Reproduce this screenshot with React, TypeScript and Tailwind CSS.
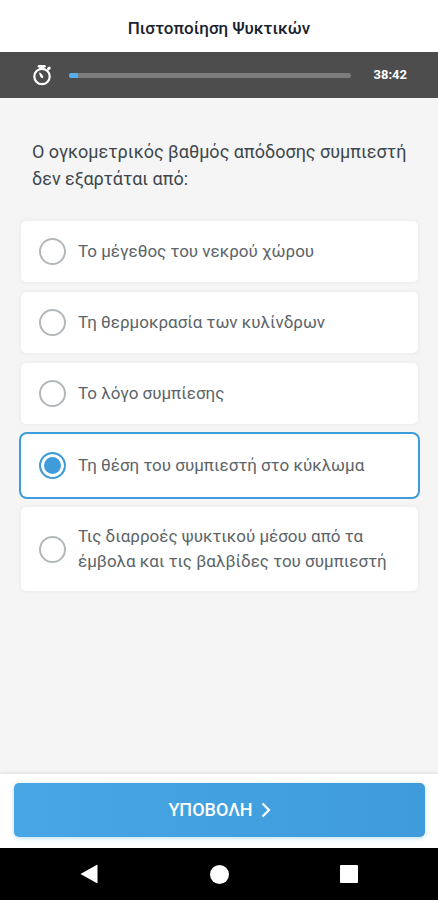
import React, { useState } from 'react';

const TOTAL_SECONDS = 40 * 60;
const REMAINING_SECONDS = 38 * 60 + 42;

const options = [
    'Το μέγεθος του νεκρού χώρου',
    'Τη θερμοκρασία των κυλίνδρων',
    'Το λόγο συμπίεσης',
    'Τη θέση του συμπιεστή στο κύκλωμα',
    'Τις διαρροές ψυκτικού μέσου από τα έμβολα και τις βαλβίδες του συμπιεστή',
];

const formatTime = (seconds: number) => {
    const mm = String(Math.floor(seconds / 60)).padStart(2, '0');
    const ss = String(seconds % 60).padStart(2, '0');
    return `${mm}:${ss}`;
};

function StopwatchIcon() {
    return (
        <svg viewBox="0 0 20 22" className="w-5 h-[22px] shrink-0" fill="none" stroke="currentColor" aria-hidden="true">
            <circle cx="10" cy="12.5" r="7.7" strokeWidth="2.2" />
            <path d="M7 2.200h5.500" strokeWidth="2.600" strokeLinecap="round" />
            <path d="M9.800 3v2" strokeWidth="5" />
            <path d="M16.500 4.800l.8-.8" strokeWidth="3" strokeLinecap="round" />
            <path d="M7.200 8.300c1.700.8 3.400 2.600 4 4 .5 1.500-.9 2.500-2 1.500C8.100 12.700 7.300 10.500 7.200 8.300z" fill="currentColor" stroke="none" />
        </svg>
    );
}

function TimerBar() {
    const elapsed = ((TOTAL_SECONDS - REMAINING_SECONDS) / TOTAL_SECONDS) * 100;

    return (
        <div className="flex items-center h-[46px] pl-8 pr-[31px] bg-[#4d4d4d] text-white">
            <StopwatchIcon />
            <div
                role="progressbar"
                aria-label="Χρόνος"
                aria-valuenow={Math.round(elapsed)}
                className="flex-1 h-[5px] ml-[17px] mr-[23px] rounded-sm bg-[#7c7c7c] overflow-hidden"
            >
                <div className="h-full bg-[#55aeeb]" style={{ width: `${elapsed}%` }} />
            </div>
            <time className="text-[13px] font-bold">{formatTime(REMAINING_SECONDS)}</time>
        </div>
    );
}

interface OptionProps {
    label: string;
    checked: boolean;
    onSelect: () => void;
}

function Option({ label, checked, onSelect }: OptionProps) {
    return (
        <label
            className={`flex items-center gap-3 px-[18px] bg-white cursor-pointer ${
                checked
                    ? 'py-[18px] rounded-md ring-2 ring-[#3f9cda]'
                    : 'py-[17px] rounded-[5px] shadow-[0_0_3px_1px_#ebebeb]'
            }`}
        >
            <input
                type="radio"
                name="answer"
                checked={checked}
                onChange={onSelect}
                className="appearance-none shrink-0 w-[27px] h-[27px] rounded-full border-2 border-[#b2b7ba] bg-white checked:border-[#3f9cda] checked:bg-[#3f9cda] checked:shadow-[inset_0_0_0_3px_white]"
            />
            <span className="text-[17px] leading-[25px] text-[#5c6468]">{label}</span>
        </label>
    );
}

export default function App() {
    const [selected, setSelected] = useState(3);

    return (
        <div className="flex flex-col min-h-screen bg-[#f5f5f5] font-[Roboto,'Noto_Sans',sans-serif]">
            <header className="flex items-center justify-center h-[52px] pt-1.5 bg-white">
                <h1 className="text-[17px] font-medium text-[#1b2330]">Πιστοποίηση Ψυκτικών</h1>
            </header>
            <TimerBar />

            <main className="flex-1 pl-[21px] pr-5 pt-10">
                <fieldset>
                    <legend className="pl-[11px] text-lg leading-[27px] text-[#3e474d]">
                        Ο ογκομετρικός βαθμός απόδοσης συμπιεστή δεν εξαρτάται από:
                    </legend>
                    <div className="flex flex-col gap-[10px] mt-[29px]">
                        {options.map((label, i) => (
                            <Option key={label} label={label} checked={selected === i} onSelect={() => setSelected(i)} />
                        ))}
                    </div>
                </fieldset>
            </main>

            <footer className="pl-[14px] pr-[13px] pt-[9px] pb-[11px] bg-white shadow-[0_-1px_3px_#dddddd]">
                <button
                    type="button"
                    className="flex items-center justify-center gap-2 w-full h-[54px] rounded-[5px] bg-linear-to-r from-[#48a6e5] to-[#3f9bd9] text-white text-lg font-medium shadow-[0_1px_4px_#b5dbf5]"
                >
                    ΥΠΟΒΟΛΗ
                    <svg viewBox="0 0 10 16" className="w-[10px] h-4" fill="none" stroke="currentColor" strokeWidth="2.2" aria-hidden="true">
                        <path d="M1.500 1.500L8 8l-6.500 6.500" />
                    </svg>
                </button>
            </footer>

            <nav className="grid grid-cols-3 h-[52px] px-6 bg-black text-white">
                <button type="button" aria-label="Πίσω" className="flex items-center justify-center">
                    <svg viewBox="0 0 18 20" className="w-[18px] h-5" fill="currentColor">
                        <path d="M0.500 10L16.500 1Q17.500 .5 17.500 1.500V18.500Q17.500 19.500 16.500 19z" />
                    </svg>
                </button>
                <button type="button" aria-label="Αρχική" className="flex items-center justify-center">
                    <span className="w-[19px] h-[19px] rounded-full bg-white" />
                </button>
                <button type="button" aria-label="Πρόσφατα" className="flex items-center justify-center">
                    <span className="w-[18px] h-[18px] rounded-[1px] bg-white" />
                </button>
            </nav>
        </div>
    );
}
